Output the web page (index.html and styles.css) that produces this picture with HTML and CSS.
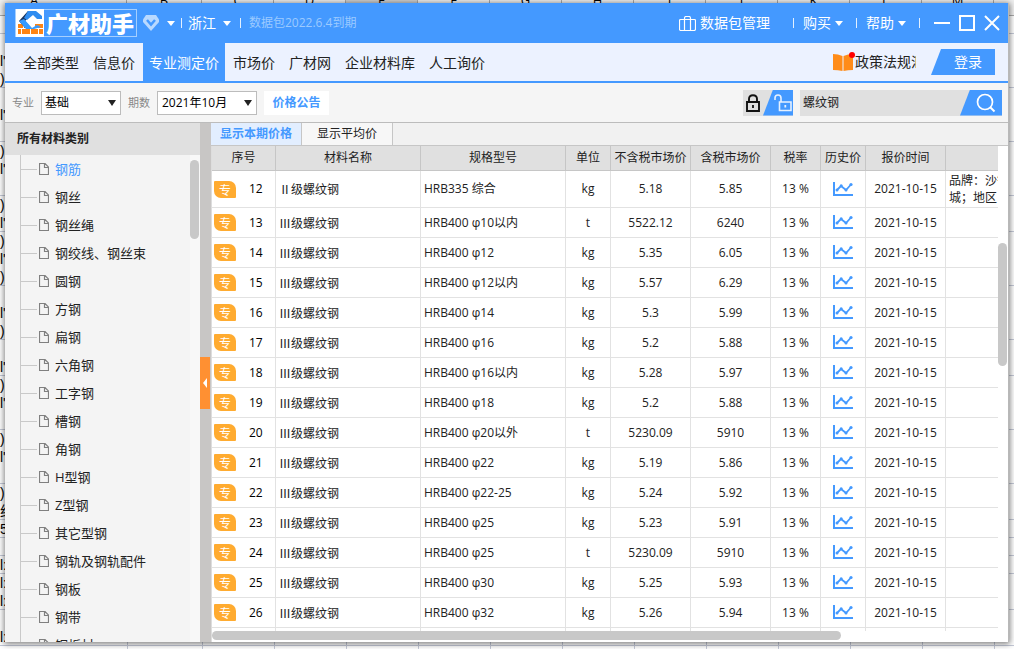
FILE: index.html
```html
<!DOCTYPE html>
<html lang="zh-CN">
<head>
<meta charset="utf-8">
<title>广材助手</title>
<link rel="stylesheet" href="styles.css">
</head>
<body>
<svg class="defs" aria-hidden="true">
  <symbol id="chart" viewBox="0 0 20 15"><path d="M1 0V13H20" fill="none" stroke="#4499ff" stroke-width="2"/><path d="M4 8L8 4L13 8L18 2.500" fill="none" stroke="#4499ff" stroke-width="1.800"/><circle cx="4" cy="8" r="1.500" fill="#4499ff"/><circle cx="8.200" cy="3.800" r="1.500" fill="#4499ff"/><circle cx="13" cy="8" r="1.500" fill="#4499ff"/><circle cx="18" cy="2.500" r="1.600" fill="#4499ff"/></symbol>
  <symbol id="doc" viewBox="0 0 10 12"><path d="M0.500 0.500H6L9.500 4V11.500H0.500ZM5.500 0.500V4.500H9.500" fill="none" stroke="#808080" stroke-width="1.200"/></symbol>
</svg>

<div class="sheet" aria-hidden="true">
  <div class="sheet-head"><span>A</span><span>B</span><span>C</span><span>D</span><span class="picked">E</span><span>F</span><span>G</span><span>H</span><span>I</span><span>J</span><span>K</span><span>L</span><span>M</span><span></span></div>
  <div class="sheet-body" id="sheet-lines"></div>
</div>

<main class="window">
  <header class="titlebar">
    <div class="brand">
      <svg class="brand-mark" viewBox="0 0 28 28"><path fill="#fff" d="M0 0h28v28H0z"/><path fill="#ff8412" d="M2 15h5v4H2zM8 17h5l2 2H8zM19 15h8v4h-8zM2 20h3v5H2zM6 20h8v5H6zM15 20h7v5h-7zM23 20h4v5h-4z"/><path fill="#19345f" d="M3 12L12 2H19L9 12L15 19H9Z"/><path fill="#369bff" d="M3 12L8 10L16 19L21 16L25 18L18 20H10Z"/><path fill="#2f8cf0" d="M12 2H20L26 7V10H21L17 6L11 11L8 9Z"/></svg>
      <span class="brand-name">广材助手</span>
    </div>
    <svg class="gem" viewBox="0 0 16 16"><path fill="#b9d9ff" d="M3 0H13L16 4.500V7L8 16L0 7V4.500Z"/><path d="M4 5L8 9.500L12 5" fill="none" stroke="#4499ff" stroke-width="2.500"/></svg>
    <i class="caret"></i><i class="bar"></i>
    <button class="tb" type="button">浙江 <i class="caret"></i></button><i class="bar gap-l"></i>
    <span class="expiry">数据包2022.6.4到期</span>
    <span class="grow"></span>
    <button class="tb pack" type="button"><svg class="case" viewBox="0 0 17 15"><path d="M1.500 3.500H15.500Q16.500 3.500 16.500 4.500V13Q16.500 14.500 15 14.500H2Q0.500 14.500 0.500 13V4.500Q0.500 3.500 1.500 3.500ZM5.500 14V2.500Q5.500 .5 7 .5H10Q11.500 .5 11.500 2.500V14" fill="none" stroke="#fff" stroke-width="1.200"/></svg>数据包管理</button><i class="bar"></i>
    <button class="tb menu" type="button">购买<i class="caret"></i></button><i class="bar"></i>
    <button class="tb menu" type="button">帮助<i class="caret"></i></button><i class="bar"></i>
    <div class="winctl">
      <button type="button" aria-label="最小化"><svg viewBox="0 0 16 16"><path d="M0 8H16" stroke="#fff" stroke-width="2"/></svg></button>
      <button type="button" aria-label="最大化"><svg viewBox="0 0 16 16"><path d="M1 1H15V15H1Z" fill="none" stroke="#fff" stroke-width="2"/></svg></button>
      <button type="button" aria-label="关闭"><svg viewBox="0 0 16 16"><path d="M1 1L15 15M15 1L1 15" stroke="#fff" stroke-width="2"/></svg></button>
    </div>
  </header>

  <nav class="nav">
    <a href="#">全部类型</a><a href="#">信息价</a><a href="#" class="active">专业测定价</a><a href="#">市场价</a><a href="#">广材网</a><a href="#">企业材料库</a><a href="#">人工询价</a>
    <span class="grow"></span>
    <a href="#" class="policy"><svg viewBox="0 0 23 20"><path fill="#ff8c19" d="M0 2Q5 2 9.500 4V19Q5 18 0 18ZM10.500 4Q15 2 20 2V18Q15 18 10.500 19Z"/><circle cx="19" cy="3" r="3" fill="#f00"/></svg><span>政策法规汇编</span></a>
    <button class="login" type="button">登录</button>
  </nav>

  <form class="filters" onsubmit="return false">
    <label for="major">专业</label>
    <span class="pick pick-s"><select id="major"><option>基础</option></select></span>
    <label for="period">期数</label>
    <span class="pick pick-m"><select id="period"><option>2021年10月</option></select></span>
    <button class="notice" type="button">价格公告</button>
    <span class="grow"></span>
    <div class="locks">
      <button type="button" aria-label="锁定"><svg viewBox="0 0 14 18"><path d="M3 8V5Q3 1.200 7 1.200T11 5V8M1 8H13V17H1Z" fill="none" stroke="#111" stroke-width="1.900"/><path d="M7 11V14" stroke="#111" stroke-width="1.800"/></svg></button>
      <button class="unlock" type="button" aria-label="解锁"><svg viewBox="0 0 18 18"><path d="M1 6V4Q1 1 4 1T7 4V8M5.500 8H17V16.500H5.500Z" fill="none" stroke="#e6f1ff" stroke-width="1.600"/><path d="M11.300 11V13.500" stroke="#e6f1ff" stroke-width="1.800"/></svg></button>
    </div>
    <div class="search">
      <input type="text" value="螺纹钢" aria-label="搜索材料">
      <button type="button" aria-label="搜索"><svg viewBox="0 0 20 20"><circle cx="9" cy="9" r="7.500" fill="none" stroke="#fff" stroke-width="1.700"/><path d="M14.500 14.500L18.500 18.500" stroke="#fff" stroke-width="2"/></svg></button>
    </div>
  </form>

  <div class="work">
    <aside class="side">
      <h2>所有材料类别</h2>
      <div class="side-body">
        <ul class="tree" id="tree"></ul>
        <div class="track"><div class="thumb side-thumb"></div></div>
      </div>
    </aside>
    <div class="splitter"><button type="button" aria-label="收起"></button></div>
    <section class="data">
      <div class="tabs"><button type="button" class="on">显示本期价格</button><button type="button">显示平均价</button></div>
      <div class="pane">
        <div class="scroller">
          <table>
            <colgroup><col class="c-no"><col class="c-name"><col class="c-name"><col class="c-unit"><col class="c-price"><col class="c-price"><col class="c-rate"><col class="c-unit"><col class="c-price"><col class="c-note"></colgroup>
            <thead><tr><th>序号</th><th>材料名称</th><th>规格型号</th><th>单位</th><th>不含税市场价</th><th>含税市场价</th><th>税率</th><th>历史价</th><th>报价时间</th><th></th></tr></thead>
            <tbody id="rows"></tbody>
          </table>
        </div>
        <div class="vtrack"><div class="thumb v-thumb"></div></div>
        <div class="htrack"><div class="thumb h-thumb"></div></div>
      </div>
    </section>
  </div>
</main>
<script src="app.js"></script>
</body>
</html>
```

FILE: styles.css
```css
* { box-sizing: border-box; }
html, body { height: 100%; }
body {
  margin: 0;
  padding: 3px 5px 7px;
  overflow: hidden;
  font: 12px/18px "Open Sans", "Noto Sans CJK SC", sans-serif;
  color: #222;
  background: #fff;
}
button, input, select { font: inherit; color: inherit; border: 0; padding: 0; margin: 0; background: none; border-radius: 0; }
a { color: inherit; text-decoration: none; }
svg { display: block; flex: none; }
.defs { position: absolute; width: 0; height: 0; }
.grow { flex: 1; }

/* spreadsheet behind the window */
.sheet {
  position: absolute;
  inset: 0;
  overflow: hidden;
  background: repeating-linear-gradient(90deg, transparent 0 71px, #c5cad8 71px 72px) 203px 0 no-repeat, linear-gradient(90deg, transparent 127px, #c5cad8 127px 128px, transparent 128px 202px, #c5cad8 202px 203px, transparent 203px);
}
.sheet-head {
  display: grid;
  grid-template-columns: 127px 75px repeat(12, 72px);
  height: 16px;
  background: #f0f0f0;
  border-bottom: 1px solid #aaa;
}
.sheet-head span { height: 4px; line-height: 1px; font-size: 13px; text-align: center; color: #000; border-right: 1px solid #aaa; }
.sheet-head span:first-child { padding-right: 58px; }
.sheet-head .picked { background: #d0d0d0; }
.sheet-body { font: 14px/18px "Liberation Sans", "Noto Sans CJK SC", sans-serif; color: #000; }
.sheet-body div { height: 18px; white-space: nowrap; }
.sheet-body .line { border-bottom: 1px solid #c5cad8; }

.window {
  position: relative;
  height: 100%;
  display: flex;
  flex-direction: column;
  overflow: hidden;
  background: #f5f5f5;
  border-right: 1px solid #b8b8b8;
  box-shadow: 0 1px 6px 1px rgba(0, 0, 0, .5);
}

.titlebar {
  flex: none;
  height: 40px;
  display: flex;
  align-items: center;
  padding: 0 8px 0 10px;
  background: #4499ff;
  color: #fff;
  font-size: 14px;
}
.brand { display: flex; align-items: center; width: 122px; height: 28px; border: 1px solid #a5cfff; margin-right: 6px; }
.brand-mark { width: 28px; height: 28px; }
.brand-name { font: 900 22px/24px "Noto Sans CJK SC", sans-serif; padding: 0 0 3px 2px; white-space: nowrap; }
.gem { width: 16px; height: 16px; margin-right: 8px; }
.caret { display: inline-block; flex: none; border: 4px solid transparent; border-top: 5px solid #fff; border-bottom: 0; }
.bar { flex: none; width: 1px; height: 10px; background: #e3f0ff; margin-left: 6px; }
.tb { display: flex; align-items: center; gap: 7px; margin-left: 6px; white-space: nowrap; }
.menu { gap: 4px; margin-left: 9px; }
.menu + .bar { margin-left: 13px; }
.pack { gap: 4px; }
.pack + .bar { margin-left: 23px; }
.case { width: 17px; height: 15px; }
.bar.gap-l { margin-left: 9px; }
.expiry { margin-left: 8px; font-size: 12px; color: #9ccaff; white-space: nowrap; }
.winctl { display: flex; gap: 9px; margin-left: 14px; }
.winctl svg { width: 16px; height: 16px; }

.nav {
  flex: none;
  height: 40px;
  display: flex;
  gap: 2px;
  padding: 0 13px 0 12px;
  background: #ecf2ff;
  border-bottom: 2px solid #4499ff;
  font-size: 14px;
  line-height: 40px;
  white-space: nowrap;
}
.nav a { padding: 0 6px; }
.nav .active { background: #4499ff; color: #fff; }
.nav .policy { display: flex; align-items: center; width: 83px; padding: 0; margin-right: 13px; }
.policy svg { width: 23px; height: 20px; margin-right: -1px; }
.policy span { overflow: hidden; }
.login {
  width: 64px;
  height: 26px;
  margin-top: 6px;
  padding-left: 10px;
  line-height: 26px;
  background: #4499ff;
  color: #fff;
  clip-path: polygon(10px 0, 100% 0, 100% 100%, 0 100%);
}

.filters {
  flex: none;
  height: 40px;
  display: flex;
  align-items: center;
  gap: 7px;
  padding: 0 6px 0 7px;
  border-bottom: 1px solid #bcbcbc;
}
.filters label { width: 22px; font-size: 11px; color: #888; white-space: nowrap; }
.pick { position: relative; height: 24px; background: #fff; border: 1px solid #bcbcbc; }
.pick-s { width: 80px; }
.pick-m { width: 100px; }
.pick select { appearance: none; width: 100%; height: 22px; padding: 0 3px; line-height: 22px; color: #000; }
.pick-m select { padding-left: 4px; }
.pick::after { content: ""; position: absolute; right: 4px; top: 8px; border: 4px solid transparent; border-top: 6px solid #222; border-bottom: 0; pointer-events: none; }
.notice { width: 65px; height: 24px; background: #fff; color: #4499ff; font-weight: 700; }
.locks { display: flex; height: 26px; width: 50px; background: #e0e0e0; }
.locks button { width: 20px; display: flex; align-items: center; justify-content: center; }
.locks svg { width: 14px; height: 18px; }
.locks .unlock { width: 30px; padding-left: 10px; background: #4499ff; clip-path: polygon(10px 0, 100% 0, 100% 100%, 0 100%); }
.locks .unlock svg { width: 18px; }
.search { display: flex; width: 202px; height: 26px; background: #e0e0e0; }
.search input { flex: 1; min-width: 0; padding: 0 3px; outline: 0; }
.search button { width: 42px; display: flex; align-items: center; justify-content: center; padding-left: 9px; background: #4499ff; clip-path: polygon(10px 0, 100% 0, 100% 100%, 0 100%); }
.search svg { width: 20px; height: 20px; }

.work { flex: 1; min-height: 0; display: flex; }
.side { width: 195px; flex: none; display: flex; flex-direction: column; background: #f4f4f4; }
.side h2 { flex: none; margin: 0; padding: 0 12px; font-size: 12px; line-height: 32px; background: #e0e0e0; }
.side-body { flex: 1; min-height: 0; display: flex; overflow: hidden; }
.tree { flex: 1; margin: 0 0 0 15px; padding: 0; list-style: none; border-left: 1px solid #c9c9c9; font-size: 13px; }
.tree li { display: flex; align-items: center; height: 28px; white-space: nowrap; }
.tree li::before { content: ""; width: 16px; height: 1px; margin-right: 2px; background: #c9c9c9; }
.tree svg { width: 10px; height: 12px; margin-right: 6px; }
.tree .current { color: #4499ff; }
.track { width: 10px; background: #f8f8f8; }
.thumb { background: #c8c8c8; border-radius: 5px; }
.side-thumb { width: 9px; height: 79px; margin-top: 5px; }

.splitter { width: 11px; flex: none; display: flex; align-items: center; background: #c8c6c5; }
.splitter button { width: 10px; height: 52px; background: #ff9032; }
.splitter button::before { content: ""; display: block; margin-left: 3px; width: 0; border: 5px solid transparent; border-right: 4px solid #fff; border-left: 0; }

.data { flex: 1; min-width: 0; display: flex; flex-direction: column; background: #f1f1f1; }
.tabs { flex: none; display: flex; height: 23px; border-bottom: 1px solid #c6c6c6; }
.tabs button { width: 91px; background: #f7f7f7; border-right: 1px solid #c6c6c6; }
.tabs .on { background: #e2eeff; color: #4499ff; font-weight: 700; }
.pane { flex: 1; min-height: 0; display: grid; grid-template: minmax(0, 1fr) 11px / minmax(0, 1fr) 10px; background: #fff; border-left: 1px solid #ddd; }
.scroller { overflow: hidden; }
.htrack { grid-column: 1 / 3; }
.h-thumb { width: 79%; height: 9px; }
.v-thumb { width: 9px; height: 123px; margin-top: 97px; }

table { width: 986px; table-layout: fixed; border-collapse: separate; border-spacing: 0; }
.c-no { width: 64px; }
.c-name { width: 145px; }
.c-unit { width: 45px; }
.c-price { width: 80px; }
.c-rate { width: 50px; }
th { height: 25px; padding: 0; font-weight: 400; background: #e0e0e0; border-right: 1px solid #c6c6c6; border-bottom: 1px solid #c6c6c6; white-space: nowrap; }
td { height: 30px; padding: 0; text-align: center; border-right: 1px solid #e2e2e2; border-bottom: 1px solid #e2e2e2; white-space: nowrap; overflow: hidden; }
tbody tr:first-child td { height: 37px; }
td.text { text-align: left; padding-left: 3px; }
td.name { font-family: "Noto Sans CJK SC", sans-serif; }
td.note { line-height: 17px; }
td svg { width: 20px; height: 15px; margin: 0 auto; }
.seq { display: flex; align-items: center; gap: 13px; padding-left: 2px; color: #000; }
.badge { width: 22px; height: 17px; font: 12px/17px "Noto Sans CJK SC", sans-serif; background: #ffab30; color: #fff; border-radius: 1px 7px 1px 7px; }
```

FILE: app.js
```js
const categories = ["钢筋", "钢丝", "钢丝绳", "钢绞线、钢丝束", "圆钢", "方钢", "扁钢", "六角钢", "工字钢", "槽钢", "角钢", "H型钢", "Z型钢", "其它型钢", "钢轨及钢轨配件", "钢板", "钢带", "铜板材"];
document.getElementById("tree").innerHTML = categories
  .map((name, i) => `<li${i ? "" : ' class="current"'}><svg><use href="#doc"/></svg>${name}</li>`)
  .join("");

const prices = [
  ["HRB335 综合", "kg", "5.18", "5.85"],
  ["HRB400 φ10以内", "t", "5522.12", "6240"],
  ["HRB400 φ12", "kg", "5.35", "6.05"],
  ["HRB400 φ12以内", "kg", "5.57", "6.29"],
  ["HRB400 φ14", "kg", "5.3", "5.99"],
  ["HRB400 φ16", "kg", "5.2", "5.88"],
  ["HRB400 φ16以内", "kg", "5.28", "5.97"],
  ["HRB400 φ18", "kg", "5.2", "5.88"],
  ["HRB400 φ20以外", "t", "5230.09", "5910"],
  ["HRB400 φ22", "kg", "5.19", "5.86"],
  ["HRB400 φ22-25", "kg", "5.24", "5.92"],
  ["HRB400 φ25", "kg", "5.23", "5.91"],
  ["HRB400 φ25", "t", "5230.09", "5910"],
  ["HRB400 φ30", "kg", "5.25", "5.93"],
  ["HRB400 φ32", "kg", "5.26", "5.94"],
  ["", "", "", ""]
];
document.getElementById("rows").innerHTML = prices
  .map(([spec, unit, net, gross], i) => {
    if (!spec) return "<tr>" + "<td></td>".repeat(10) + "</tr>";
    return `<tr><td><div class="seq"><span class="badge">专</span>${i + 12}</div></td>
      <td class="text name">${i ? "Ⅲ" : "Ⅱ"}级螺纹钢</td><td class="text">${spec}</td><td>${unit}</td>
      <td>${net}</td><td>${gross}</td><td>13 %</td><td><svg><use href="#chart"/></svg></td>
      <td>2021-10-15</td><td class="text note">${i ? "" : "品牌：沙钢<br>城；地区"}</td></tr>`;
  })
  .join("");

// cell text of the sheet that shows past the window's left edge
const edge = ["", "", "l'", ")", "", "l'", "", ")", "l'", "", ")", "l'", ")", "l'", ")", "", "l'", ")", "", "l'", ")", "l'", "", ")", "l'", "", ")", "约", "5", "", "l:", "l:", "l:", "", "l:"];
const ruled = [1, 4, 7, 10, 12, 15, 18, 20, 23, 26, 28, 29, 30, 31, 33, 35];
document.getElementById("sheet-lines").innerHTML = edge
  .map((text, i) => `<div${ruled.includes(i + 1) ? ' class="line"' : ""}>${text}</div>`)
  .join("");
```
